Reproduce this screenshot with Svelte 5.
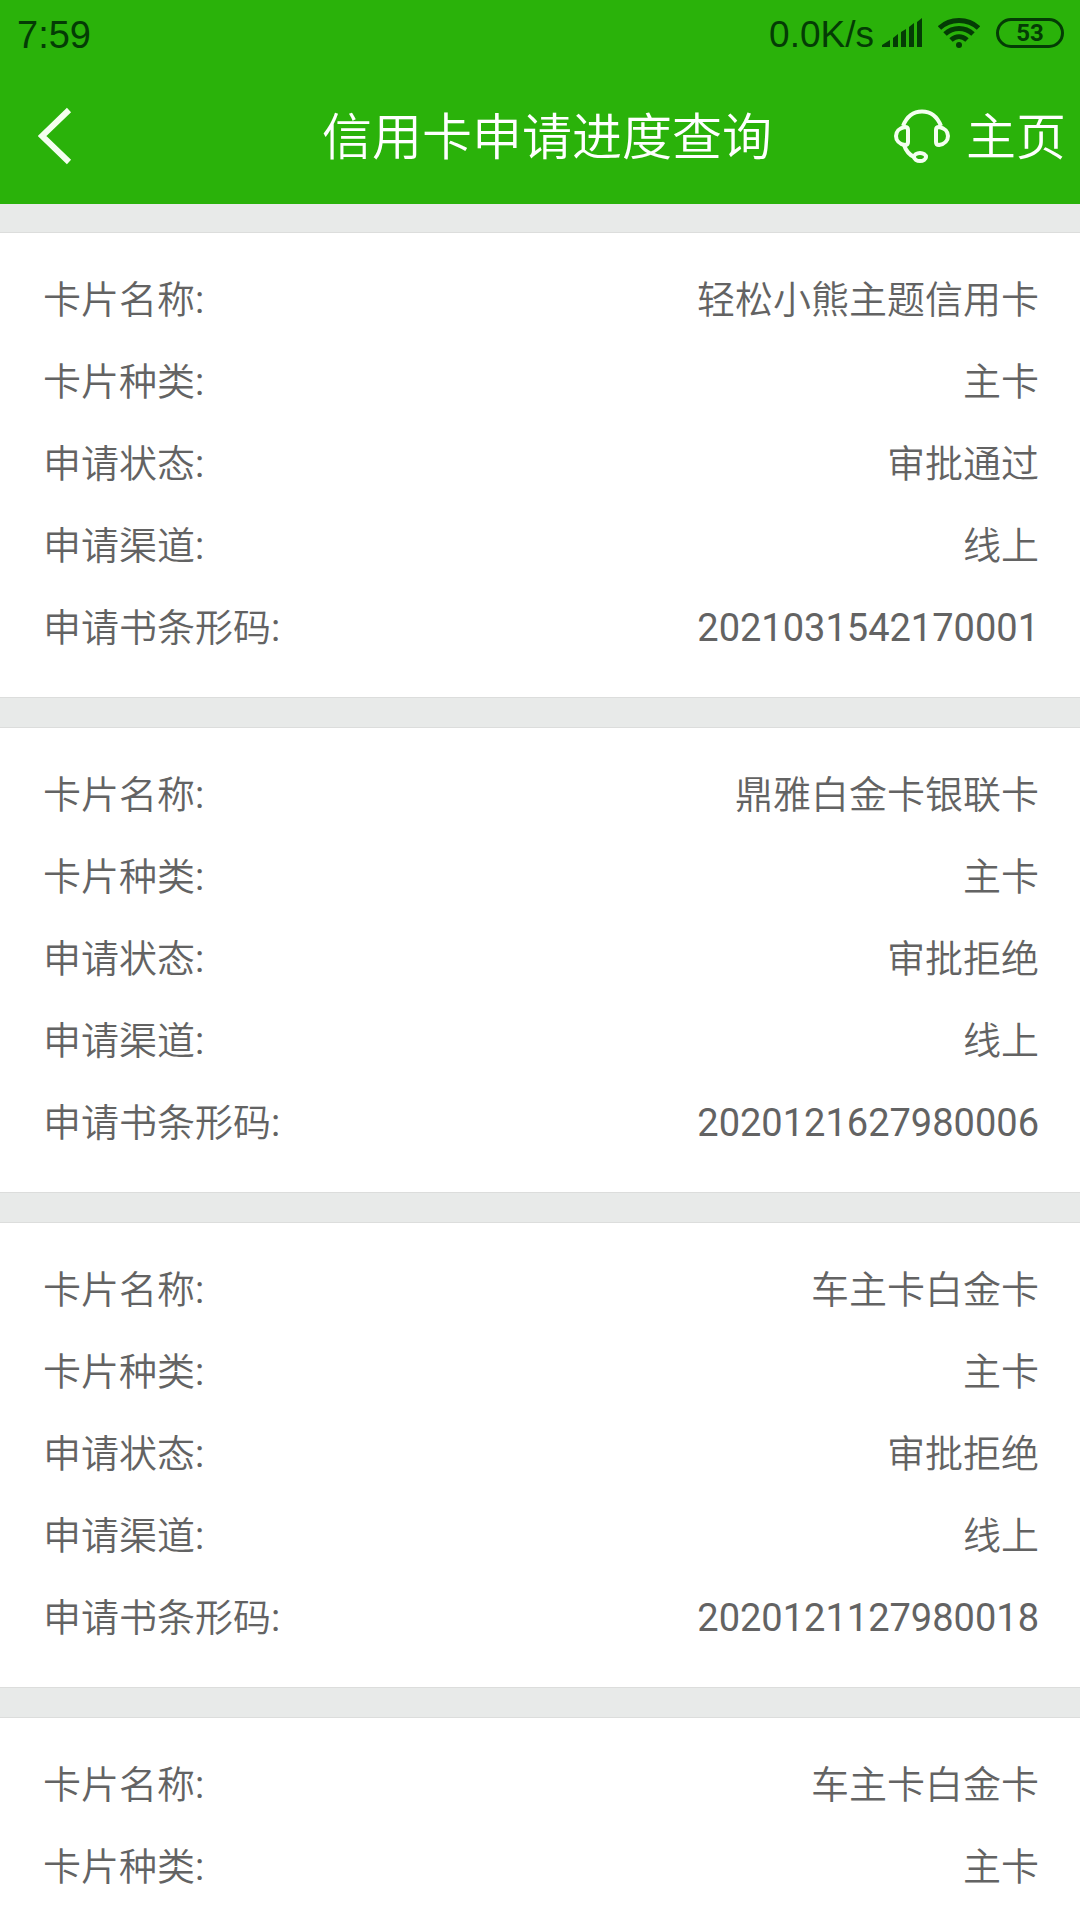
<script>
  const labels = ['卡片名称', '卡片种类', '申请状态', '申请渠道', '申请书条形码'];

  const applications = [
    ['轻松小熊主题信用卡', '主卡', '审批通过', '线上', '2021031542170001'],
    ['鼎雅白金卡银联卡', '主卡', '审批拒绝', '线上', '2020121627980006'],
    ['车主卡白金卡', '主卡', '审批拒绝', '线上', '2020121127980018'],
    ['车主卡白金卡', '主卡']
  ];
</script>

<div class="screen">
  <header>
    <div class="status">
      <span class="time">7:59</span>
      <div class="indicators">
        <span class="speed">0.0K/s</span>
        <svg class="signal" width="41" height="30" viewBox="0 0 41 30" aria-hidden="true">
          <path d="M0 29 V27 L8 22 V29Z M11 20 L16 16 V29 H11Z M19 14 L24 11 V29 H19Z M27 9 L32 5 V29 H27Z M35 4 L40 0 V29 H35Z" />
        </svg>
        <svg class="wifi" width="42" height="30" viewBox="0 0 42 30" aria-hidden="true">
          <path d="M1.500 10 C12 0 30 0 40.500 10 M7 16 C15 8.500 27 8.500 35 16 M13 22 C18 17.500 24 17.500 29 22" />
          <circle cx="21" cy="27" r="3" />
        </svg>
        <span class="battery">53</span>
      </div>
    </div>
    <nav>
      <button class="back" aria-label="返回">
        <svg width="34" height="58" viewBox="0 0 34 58" aria-hidden="true">
          <path d="M31 3 L4 29 L31 55" />
        </svg>
      </button>
      <h1>信用卡申请进度查询</h1>
      <div class="actions">
        <button aria-label="客服">
          <svg width="56" height="54" viewBox="0 0 56 54" aria-hidden="true">
            <path d="M9 17 C13 7 20 2.500 28 2.500 S43 7 47 17" />
            <path d="M14 21 Q14 18 11 18 C5 19 2 23 2 27 S5 35 11 36 Q14 36 14 33Z" />
            <path d="M42 21 Q42 18 45 18 C51 19 54 23 54 27 S51 35 45 36 Q42 36 42 33Z" />
            <path d="M10 36 C12 42 16 46 20 48" />
            <ellipse cx="26" cy="48" rx="6" ry="4" />
          </svg>
        </button>
        <a href="#home">主页</a>
      </div>
    </nav>
  </header>

  <main>
    {#each applications as values}
      <dl>
        {#each values as value, i}
          <div class="row">
            <dt>{labels[i]}<span class="latin">:</span></dt>
            <dd class:latin={i === 4}>{value}</dd>
          </div>
        {/each}
      </dl>
    {/each}
  </main>
</div>

<style>
  :global(body) {
    background: #e8eae9;
  }

  .screen {
    display: flex;
    flex-direction: column;
    height: 100vh;
    overflow: hidden;
    font-family: Roboto, 'Noto Sans CJK SC', sans-serif;
    font-weight: 350;
  }

  header {
    flex: none;
    background: #2ab20a;
    color: #fff;
  }

  .status {
    display: flex;
    align-items: center;
    justify-content: space-between;
    height: 66px;
    padding: 0 16px 0 17px;
    color: #043c05;
    font-weight: 400;
  }

  .indicators {
    display: flex;
    align-items: center;
  }

  .time,
  .speed {
    padding-top: 4px;
    font-family: 'Liberation Sans', sans-serif;
    font-size: 38px;
    line-height: 44px;
  }

  .speed {
    font-size: 37px;
  }

  .signal {
    margin-left: 8px;
    fill: #043c05;
  }

  .wifi {
    margin: 0 16px 0 15px;
    fill: none;
    stroke: #043c05;
    stroke-width: 5;
  }

  .wifi circle {
    fill: #043c05;
    stroke: none;
  }

  .battery {
    box-sizing: border-box;
    width: 68px;
    height: 30px;
    border: 3px solid #043c05;
    border-radius: 15px;
    font-size: 24px;
    font-weight: 700;
    line-height: 25px;
    text-align: center;
  }

  nav {
    display: grid;
    grid-template-columns: 1fr auto 1fr;
    align-items: center;
    height: 138px;
    padding: 2px 14px 0 28px;
    box-sizing: border-box;
  }

  button {
    display: flex;
    padding: 0;
    border: 0;
    background: none;
  }

  nav svg {
    fill: none;
    stroke: #f4fff0;
    stroke-width: 4;
  }

  .back {
    padding-left: 10px;
  }

  .back svg {
    stroke-width: 6;
  }

  h1 {
    margin: 0;
    padding-top: 4px;
    font-size: 50px;
    font-weight: 350;
    line-height: 60px;
  }

  .actions {
    display: flex;
    align-items: center;
    justify-content: flex-end;
    gap: 16px;
  }

  a {
    padding-top: 4px;
    color: #fff;
    font-size: 50px;
    line-height: 60px;
    text-decoration: none;
  }

  main {
    display: flex;
    flex: 1;
    flex-direction: column;
    gap: 29px;
    min-height: 0;
    padding-top: 28px;
    overflow-y: auto;
    scrollbar-width: none;
  }

  dl {
    flex: none;
    margin: 0;
    padding: 26px 41px 28px 43px;
    border: solid #dcdddc;
    border-width: 1px 0;
    background: #fff;
    color: #636363;
    font-size: 38px;
  }

  .row {
    display: flex;
    justify-content: space-between;
    line-height: 82px;
  }

  dt,
  dd {
    margin: 0;
  }

  .latin {
    font-weight: 400;
  }
</style>
